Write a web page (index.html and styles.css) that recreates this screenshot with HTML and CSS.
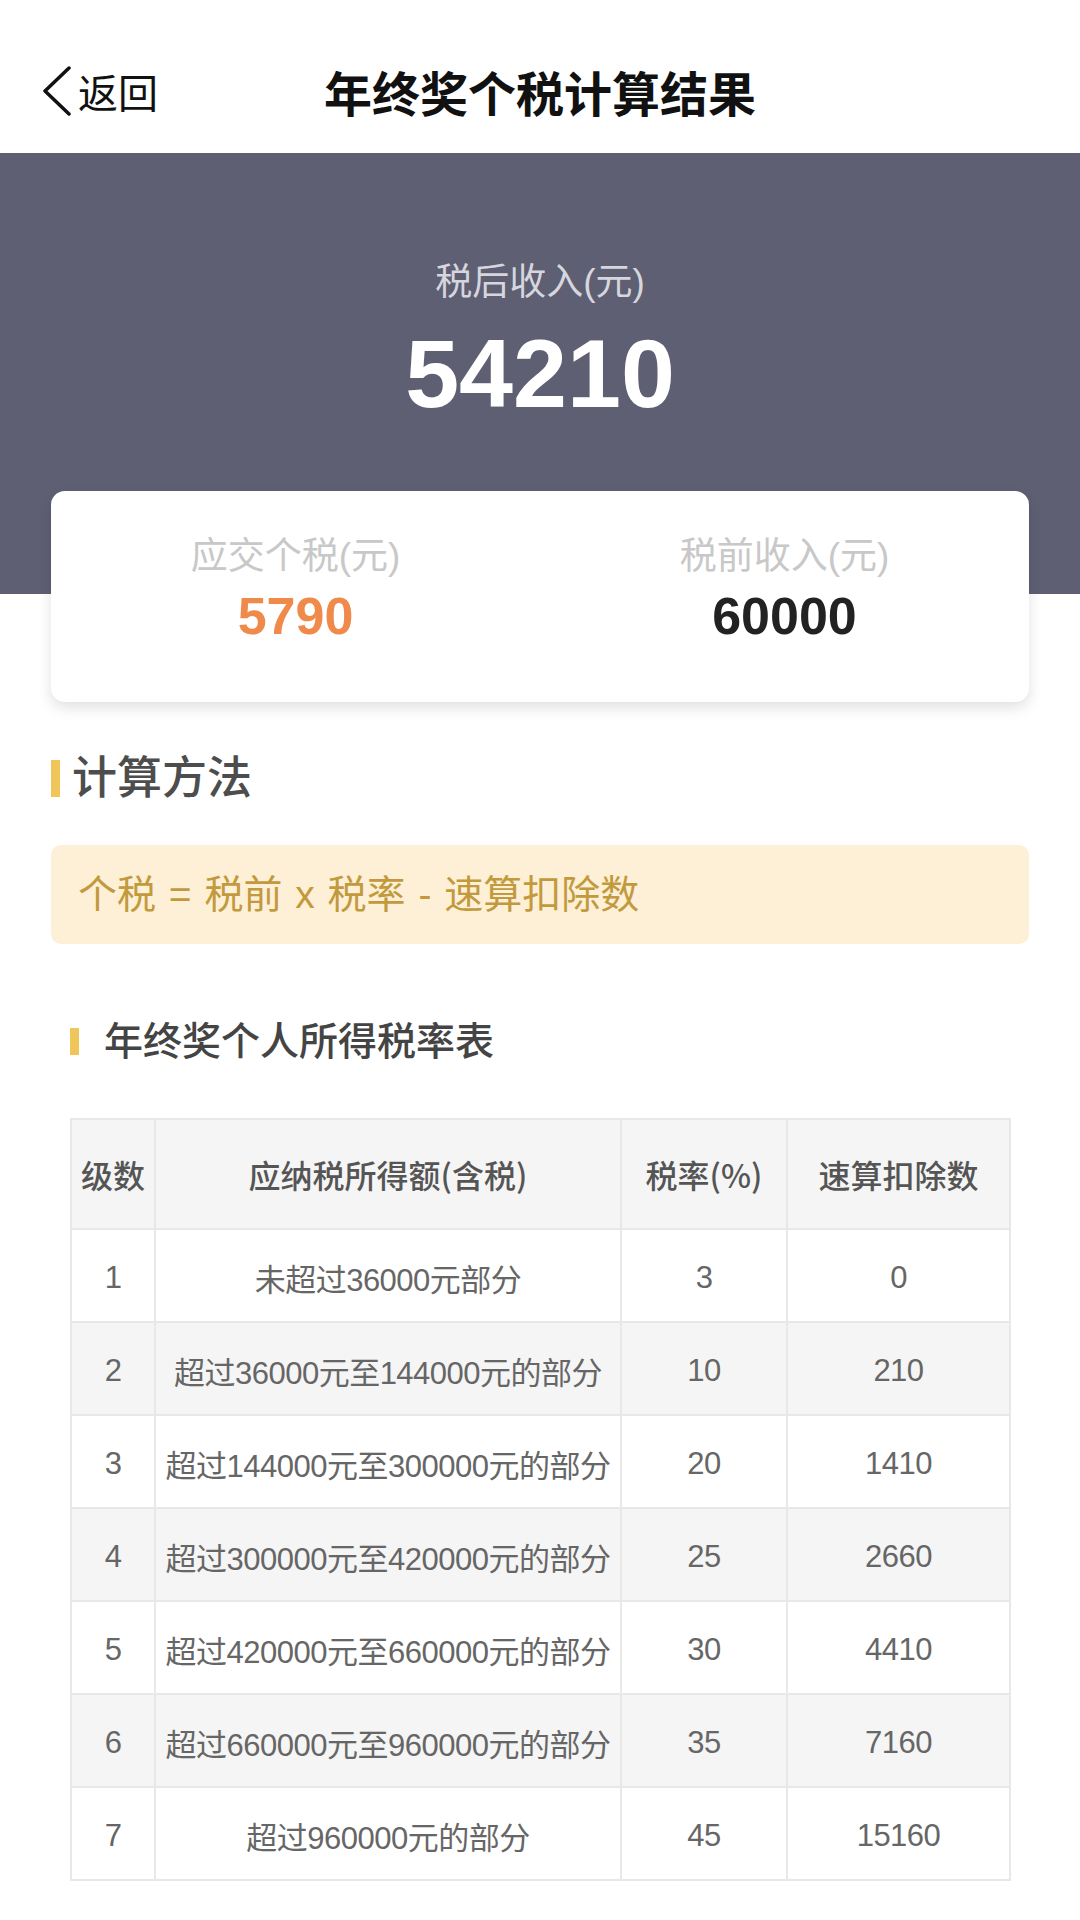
FILE: index.html
```html
<!DOCTYPE html>
<html lang="zh-CN">
<head>
    <meta charset="UTF-8">
    <meta name="viewport" content="width=device-width, initial-scale=1.0">
    <title>年终奖个税计算结果</title>
    <link rel="stylesheet" href="styles.css">
</head>
<body>
    <header class="nav-bar">
        <a class="back-btn" href="#">
            <svg class="back-icon" width="30" height="50" viewBox="0 0 30 50">
                <polyline points="27,2 3,25 27,48" fill="none" stroke="#111" stroke-width="3.5" stroke-linecap="round" stroke-linejoin="round"/>
            </svg>
            <span>返回</span>
        </a>
        <h1 class="nav-title">年终奖个税计算结果</h1>
        <div></div>
    </header>

    <section class="summary">
        <div class="summary-label">税后收入(元)</div>
        <div class="summary-value">54210</div>
    </section>

    <div class="card">
        <div class="card-item">
            <div class="card-label">应交个税(元)</div>
            <div class="card-value tax">5790</div>
        </div>
        <div class="card-item">
            <div class="card-label">税前收入(元)</div>
            <div class="card-value">60000</div>
        </div>
    </div>

    <h2 class="section-title">计算方法</h2>
    <div class="formula">个税 = 税前 x 税率 - 速算扣除数</div>

    <h3 class="table-title">年终奖个人所得税率表</h3>
    <table class="rate-table">
        <thead>
            <tr>
                <th class="col-level">级数</th>
                <th class="col-range">应纳税所得额(含税)</th>
                <th class="col-rate">税率(%)</th>
                <th class="col-deduct">速算扣除数</th>
            </tr>
        </thead>
        <tbody>
            <tr><td>1</td><td>未超过36000元部分</td><td>3</td><td>0</td></tr>
            <tr><td>2</td><td>超过36000元至144000元的部分</td><td>10</td><td>210</td></tr>
            <tr><td>3</td><td>超过144000元至300000元的部分</td><td>20</td><td>1410</td></tr>
            <tr><td>4</td><td>超过300000元至420000元的部分</td><td>25</td><td>2660</td></tr>
            <tr><td>5</td><td>超过420000元至660000元的部分</td><td>30</td><td>4410</td></tr>
            <tr><td>6</td><td>超过660000元至960000元的部分</td><td>35</td><td>7160</td></tr>
            <tr><td>7</td><td>超过960000元的部分</td><td>45</td><td>15160</td></tr>
        </tbody>
    </table>
</body>
</html>
```

FILE: styles.css
```css
body {
    font-family: "Liberation Sans", "Noto Sans CJK SC", sans-serif;
    margin: 0;
    padding: 0;
    background-color: #fff;
    color: #111;
    width: 1080px;
}

.nav-bar {
    display: grid;
    grid-template-columns: 1fr auto 1fr;
    align-items: center;
    height: 153px;
    padding-top: 28px;
    box-sizing: border-box;
}

.back-btn {
    display: flex;
    align-items: center;
    padding-left: 42px;
    color: #111;
    text-decoration: none;
    font-size: 40px;
}

.back-icon {
    margin-right: 6px;
}

.nav-title {
    margin: 0;
    font-size: 48px;
    font-weight: 700;
    color: #111;
}

.summary {
    background-color: #5e5f73;
    text-align: center;
    padding: 108px 0 172px;
}

.summary-label {
    font-size: 37px;
    line-height: 44px;
    color: #d6d6de;
}

.summary-value {
    margin-top: 20px;
    font-size: 97px;
    line-height: 97px;
    font-weight: 700;
    color: #fff;
}

.card {
    display: flex;
    margin: -103px 51px 0;
    padding: 44px 0 60px;
    background-color: #fff;
    border-radius: 14px;
    box-shadow: 0 6px 14px rgba(0, 0, 0, 0.12);
    position: relative;
}

.card-item {
    flex: 1;
    text-align: center;
}

.card-label {
    font-size: 37px;
    line-height: 44px;
    color: #c8c8c8;
}

.card-value {
    margin-top: 11px;
    font-size: 52px;
    line-height: 52px;
    font-weight: 700;
    color: #222;
}

.card-value.tax {
    color: #f08a4b;
}

.section-title {
    display: flex;
    align-items: center;
    margin: 50px 51px 0;
    font-size: 45px;
    line-height: 53px;
    font-weight: 500;
    color: #4d4d4d;
}

.section-title::before {
    content: "";
    width: 9px;
    height: 37px;
    margin-right: 12px;
    background-color: #f0c65b;
}

.formula {
    margin: 40px 51px 0;
    padding: 0 27px;
    height: 99px;
    line-height: 99px;
    background-color: #fdf0d6;
    border-radius: 10px;
    font-size: 39px;
    word-spacing: 2px;
    color: #c29a3d;
}

.table-title {
    display: flex;
    align-items: center;
    margin: 74px 70px 0;
    font-size: 39px;
    line-height: 47px;
    font-weight: 500;
    color: #444;
}

.table-title::before {
    content: "";
    width: 9px;
    height: 27px;
    margin-right: 25px;
    background-color: #f0c65b;
}

.rate-table {
    margin: 53px 0 0 70px;
    width: 931px;
    border-collapse: collapse;
    table-layout: fixed;
    color: #666;
}

.rate-table th,
.rate-table td {
    border: 2px solid #e8e8e8;
    text-align: center;
    white-space: nowrap;
    padding: 0;
    overflow: visible;
}

.rate-table th {
    height: 108px;
    background-color: #f5f5f5;
    font-family: "Noto Sans CJK SC", sans-serif;
    font-size: 32px;
    font-weight: 500;
    color: #555;
}

.rate-table td {
    height: 87px;
    padding-top: 4px;
    font-size: 31px;
    letter-spacing: -0.5px;
}

.rate-table tbody tr:nth-child(even) td {
    background-color: #f5f5f5;
}

.col-level { width: 82px; }
.col-range { width: 464px; }
.col-rate { width: 164px; }
.col-deduct { width: 221px; }
```
